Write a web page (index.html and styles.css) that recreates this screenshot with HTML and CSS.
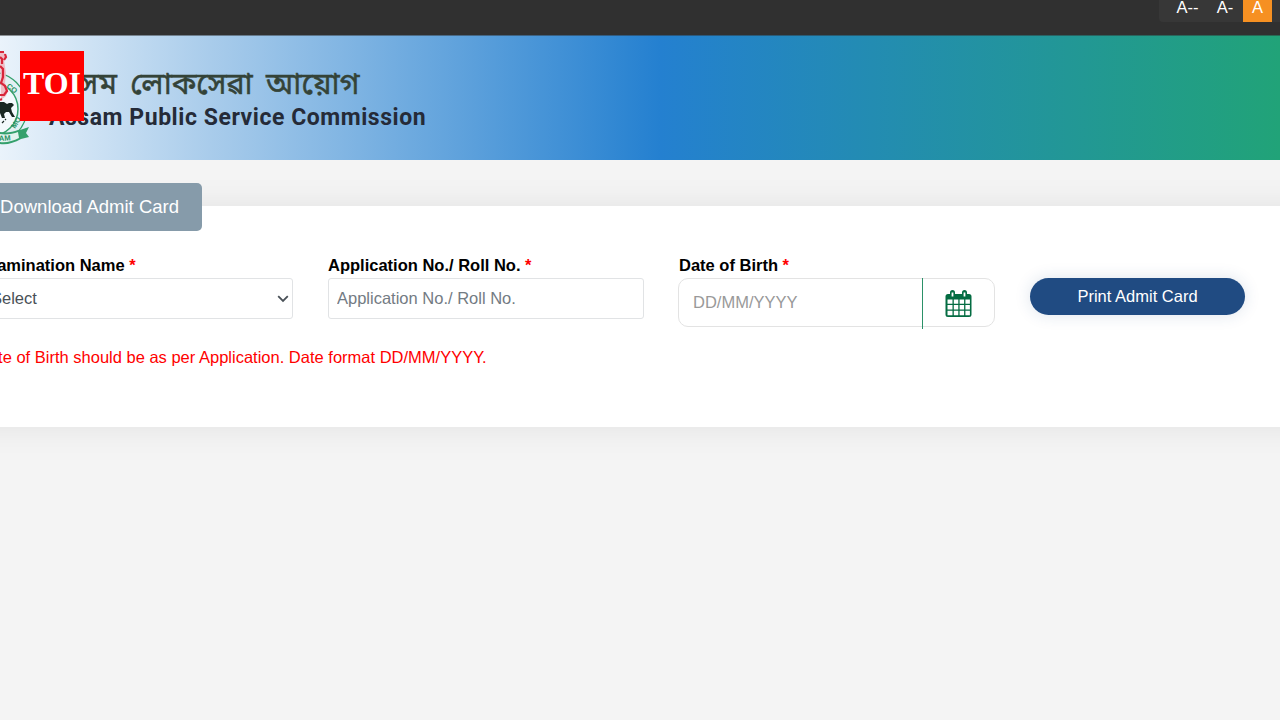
FILE: index.html
```html
<!DOCTYPE html>
<html lang="en">
<head>
<meta charset="UTF-8" />
<meta name="viewport" content="width=device-width, initial-scale=1" />
<title>Download Admit Card | Assam Public Service Commission</title>
<link rel="stylesheet" href="styles.css">
</head>
<body>

<div class="topbar">
  <div class="font-sizes">
    <a class="size-btn size-smallest">A--</a>
    <a class="size-btn">A-</a>
    <a class="size-btn active">A</a>
  </div>
</div>

<header class="banner">
  <svg class="emblem" width="30" height="124" viewBox="0 0 30 124">
    <!-- ring -->
    <circle cx="-9" cy="72" r="36" fill="#e3f0f3" stroke="#34a06c" stroke-width="1.3"/>
    <circle cx="-9" cy="73" r="27" fill="#f3f9fc" stroke="#34a06c" stroke-width="1.5"/>
    <text class="ring-text" x="6" y="51" transform="rotate(38 6 51)">CO</text>
    <text class="ring-text" x="15" y="93" transform="rotate(-58 15 93)">MO</text>
    <!-- lion capital -->
    <path d="M0 15l4 1 2 5-2 3 2 13-1 10 3 7-2 6-5 4z" fill="#eebcc4"/>
    <path d="M0 16l4 0M5 18l1 3-2 3M0 21l2 2v5M0 30l3 3v8l-2 6M0 46l5 4 2 5-3 4H0M0 64l2-1" fill="none" stroke="#d8263a" stroke-width="2.200"/>
    <!-- elephant -->
    <path d="M0 66l4 0 3 2 2-1 3 0 2 2-3 3 1 4 3 5h-3l-3-5-3 0-2 2 1 4H2l-2-5z" fill="#182722"/>
    <path d="M2 87l2-2M5 83l1 1" fill="none" stroke="#182722" stroke-width="1.2"/>
    <!-- ribbon -->
    <path d="M0 96c7 1 13 0 18-2l2 0 9-3-3 6 3 4-8 2c-7 4-14 6-21 5z" fill="#34a06c"/>
    <path d="M0 98c6 1 13 0 18-2l1 6c-6 3-13 5-19 4z" fill="#e3f2ee"/>
    <text class="ring-text" x="-1" y="105" transform="rotate(-4 0 105)">AM</text>
  </svg>
  <div class="brand">
    <div class="brand-local" lang="as">অসম লোকসেৱা আয়োগ</div>
    <div class="brand-name">Assam Public Service Commission</div>
  </div>
  <div class="toi-badge">TOI</div>
</header>

<main class="panel">
  <h1 class="panel-title">Download Admit Card</h1>

  <form class="admit-form">
    <div class="field">
      <label>Examination Name <span class="req">*</span></label>
      <div class="control select">
        <span>Select</span>
        <svg width="12" height="8" viewBox="0 0 12 8"><path d="M1.2 1.2L6 6l4.800-4.800" fill="none" stroke="#495057" stroke-width="1.8"/></svg>
      </div>
    </div>
    <div class="field">
      <label for="roll">Application No./ Roll No. <span class="req">*</span></label>
      <input class="control" id="roll" type="text" placeholder="Application No./ Roll No.">
    </div>
    <div class="field">
      <label for="dob">Date of Birth <span class="req">*</span></label>
      <div class="date-box">
        <input class="date-input" id="dob" type="text" placeholder="DD/MM/YYYY">
        <div class="date-icon">
          <svg width="28" height="29" viewBox="0 0 28 29">
            <path fill="#046c42" fill-rule="evenodd" d="M3 5h2V3.500a2.500 2.500 0 0 1 5 0V5h7V3.500a2.500 2.500 0 0 1 5 0V5h2a2.500 2.500 0 0 1 2.500 2.500v18a2.500 2.500 0 0 1-2.500 2.500H3a2.500 2.500 0 0 1-2.500-2.500v-18A2.500 2.500 0 0 1 3 5zM2.500 10.500v4.300h5v-4.300zM8.800 10.500v4.300h4.500v-4.300zM14.600 10.500v4.300h4.500v-4.300zM20.400 10.500v4.300h4.500v-4.300zM2.500 16v4.500h5V16zM8.800 16v4.500h4.500V16zM14.600 16v4.500h4.500V16zM20.400 16v4.500h4.500V16zM2.500 21.800v4.400h5v-4.400zM8.800 21.800v4.400h4.500v-4.400zM14.600 21.800v4.400h4.500v-4.400zM20.400 21.800v4.400h4.500v-4.400zM6.600 3.500v4h1.800v-4zM18.600 3.500v4h1.800v-4z"/>
          </svg>
        </div>
      </div>
    </div>
    <button class="print-btn" type="button">Print Admit Card</button>
  </form>

  <p class="note">Date of Birth should be as per Application. Date format DD/MM/YYYY.</p>
</main>

</body>
</html>
```
FILE: styles.css
```css
* {
  box-sizing: border-box;
}
html, body {
  margin: 0;
  padding: 0;
  overflow: hidden;
}
body {
  height: 720px;
  background: #f4f4f4;
  font-family: "Liberation Sans", Arial, sans-serif;
  font-size: 16.5px;
  color: #000;
}

/* top bar */
.topbar {
  display: flex;
  justify-content: flex-end;
  height: 35px;
  background: #303030;
}
.font-sizes {
  display: flex;
  width: 121px;
  height: 22px;
  padding-left: 9px;
  background: #373737;
  border-radius: 0 0 0 4px;
}
.size-btn {
  width: 36px;
  height: 22px;
  line-height: 14px;
  text-align: center;
  color: #fff;
}
.size-smallest {
  width: 39px;
}
.size-btn.active {
  width: 29px;
  background: #f69022;
}

/* banner */
.banner {
  position: relative;
  display: flex;
  height: 125px;
  border-top: 1px solid rgba(48, 48, 48, 0.5);
  background: linear-gradient(90deg, #eaf3fb 0, #a9cceb 210px, #2480d0 660px, #21a378 1280px);
}
.emblem {
  flex: none;
}
.ring-text {
  font-family: "Liberation Sans", Arial, sans-serif;
  font-size: 7.5px;
  font-weight: bold;
  fill: #249060;
}
.brand {
  padding: 27px 0 0 19px;
  white-space: nowrap;
}
.brand-local {
  height: 41px;
  padding-left: 3px;
  line-height: 46px;
  font-family: "Noto Sans Bengali", "Noto Sans", sans-serif;
  font-size: 30.5px;
  word-spacing: 5.5px;
  color: #344338;
  -webkit-text-stroke: 0.5px #344338;
}
.brand-name {
  line-height: 27px;
  font-family: Roboto, sans-serif;
  font-size: 23px;
  font-weight: bold;
  letter-spacing: 0.55px;
  color: #252b38;
}
.toi-badge {
  position: absolute;
  left: 20px;
  top: 15px;
  width: 64px;
  height: 70px;
  line-height: 64px;
  text-align: center;
  background: #f00;
  color: #fff;
  font-family: "Liberation Serif", "Times New Roman", serif;
  font-size: 32px;
  font-weight: bold;
}

/* form panel, runs past the left edge */
.panel {
  display: flow-root;
  height: 221px;
  margin: 46px -40px 0 -58px;
  padding-left: 35px;
  background: #fff;
  box-shadow: 0 0 30px rgba(0, 0, 0, 0.08);
}
.panel-title {
  width: 225px;
  height: 48px;
  margin: -23px 0 0;
  padding-right: 23px;
  line-height: 47px;
  text-align: right;
  background: #869baa;
  border-radius: 5px;
  color: #fff;
  font-size: 18.5px;
  font-weight: normal;
}
.admit-form {
  display: flex;
  gap: 35px;
  margin-top: 24px;
}
.field {
  width: 316px;
}
.field label {
  display: block;
  height: 23px;
  line-height: 20px;
  font-weight: bold;
}
.req {
  color: #f00;
}
.control {
  display: block;
  width: 316px;
  height: 41px;
  padding: 0 8px;
  border: 1px solid #e1e3e5;
  border-radius: 3px;
  background: #fff;
  font: 16.5px "Liberation Sans", Arial, sans-serif;
  color: #495057;
}
.select {
  display: flex;
  align-items: center;
  justify-content: space-between;
  padding: 0 3px 0 13px;
}
.control::placeholder {
  color: #737b83;
}
.date-box {
  display: flex;
  width: 317px;
  height: 49px;
  margin-left: -1px;
  border: 1px solid #e3e3e3;
  border-radius: 10px;
}
.date-input {
  width: 243px;
  padding: 0 14px;
  border: 0;
  background: none;
  font: 16.5px "Liberation Sans", Arial, sans-serif;
}
.date-input::placeholder {
  color: #999;
}
.date-icon {
  display: flex;
  justify-content: center;
  width: 72px;
  height: 51px;
  margin-top: -1px;
  padding-top: 11px;
  border-left: 1px solid #2b9168;
}
.print-btn {
  width: 215px;
  height: 37px;
  margin-top: 23px;
  padding: 0;
  border: 0;
  border-radius: 19px;
  background: #204b82;
  box-shadow: 0 0 16px rgba(32, 75, 130, 0.15);
  color: #fff;
  font: 16.5px "Liberation Sans", Arial, sans-serif;
}
.note {
  margin: 19px 0 0;
  line-height: 22px;
  color: #f00;
}
```
